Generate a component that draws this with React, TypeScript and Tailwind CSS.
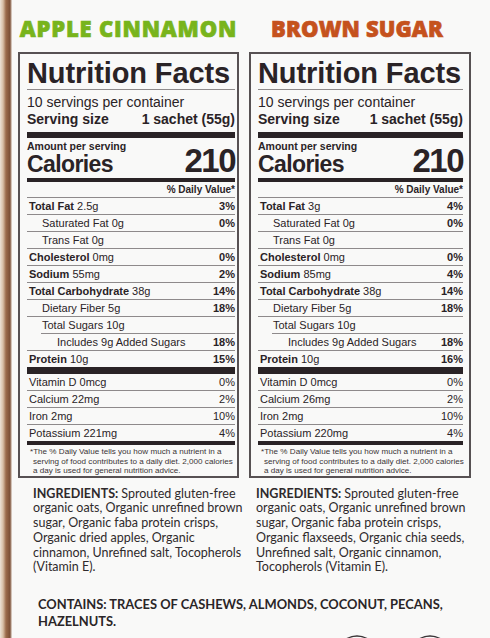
import React from "react";

type Label = {
  title: string;
  titleClass: string;
  fat: string;
  fatDv: string;
  sodium: string;
  sodiumDv: string;
  proteinDv: string;
  calcium: string;
  potassium: string;
  ingredients: string[];
  colClass: string;
  boxClass: string;
  ingPad: string;
};

const labels: Label[] = [
  {
    title: "APPLE CINNAMON",
    titleClass: "text-[#78b41c] tracking-[0.8px]",
    fat: "2.5g",
    fatDv: "3%",
    sodium: "55mg",
    sodiumDv: "2%",
    proteinDv: "15%",
    calcium: "22mg",
    potassium: "221mg",
    ingredients: [
      "Sprouted gluten-free",
      "organic oats, Organic unrefined brown",
      "sugar, Organic faba protein crisps,",
      "Organic dried apples, Organic",
      "cinnamon, Unrefined salt, Tocopherols",
      "(Vitamin E).",
    ],
    colClass: "w-[221px]",
    boxClass: "pl-[7px] pr-[2px]",
    ingPad: "pl-[15px]",
  },
  {
    title: "BROWN SUGAR",
    titleClass: "text-[#c5521d] tracking-[0.1px] pr-[6px]",
    fat: "3g",
    fatDv: "4%",
    sodium: "85mg",
    sodiumDv: "4%",
    proteinDv: "16%",
    calcium: "26mg",
    potassium: "220mg",
    ingredients: [
      "Sprouted gluten-free",
      "organic oats, Organic unrefined brown",
      "sugar, Organic faba protein crisps,",
      "Organic flaxseeds, Organic chia seeds,",
      "Unrefined salt, Organic cinnamon,",
      "Tocopherols (Vitamin E).",
    ],
    colClass: "w-[222px]",
    boxClass: "pl-[7px] pr-[6px]",
    ingPad: "pl-[7px]",
  },
];

type Nutrient = {
  bold?: string;
  text: string;
  dv?: string;
  indent?: 0 | 1 | 2;
  lineIndent?: boolean;
  last?: boolean;
};

function NutrientRow({ bold, text, dv, indent = 0, lineIndent, last }: Nutrient) {
  const pad = indent === 2 ? "pl-[30px]" : indent === 1 ? "pl-[15px]" : "pl-[2px]";
  return (
    <div className={`relative flex h-[16px] items-center justify-between ${pad} ${last ? "" : "mb-[1px]"}`}>
      <span>
        {bold && <span className="font-bold">{bold} </span>}
        {text}
      </span>
      {dv && <span className="font-bold">{dv}</span>}
      {!last && (
        <div
          className={`absolute bottom-[-1px] right-0 h-[1px] bg-[#8e8a8b] ${lineIndent ? "left-[14px]" : "left-0"}`}
        />
      )}
    </div>
  );
}

function VitaminRow({ text, dv, last }: { text: string; dv: string; last?: boolean }) {
  return (
    <div
      className={`flex items-center justify-between pl-[2px] ${last ? "h-[16px]" : "h-[17px] border-b border-[#8e8a8b]"}`}
    >
      <span>{text}</span>
      <span>{dv}</span>
    </div>
  );
}

function NutritionBox({ l }: { l: Label }) {
  const rows: Nutrient[] = [
    { bold: "Total Fat", text: l.fat, dv: l.fatDv },
    { text: "Saturated Fat 0g", dv: "0%", indent: 1 },
    { text: "Trans Fat 0g", indent: 1 },
    { bold: "Cholesterol", text: "0mg", dv: "0%" },
    { bold: "Sodium", text: l.sodium, dv: l.sodiumDv },
    { bold: "Total Carbohydrate", text: "38g", dv: "14%" },
    { text: "Dietary Fiber 5g", dv: "18%", indent: 1 },
    { text: "Total Sugars 10g", indent: 1, lineIndent: true },
    { text: "Includes 9g Added Sugars", dv: "18%", indent: 2 },
    { bold: "Protein", text: "10g", dv: l.proteinDv, last: true },
  ];

  return (
    <div
      className={`mt-[13px] border-2 border-[#575153] pt-[3px] text-[#2a2326] font-['Liberation_Sans',Arial,sans-serif] ${l.boxClass}`}
    >
      <div className="text-[29px] font-bold leading-[32px] tracking-[-0.1px] whitespace-nowrap">
        Nutrition Facts
      </div>
      <div className="h-[1px] bg-[#8e8a8b]" />
      <div className="mt-[4px] text-[14px] leading-[16px]">10 servings per container</div>
      <div className="mt-[1px] flex justify-between text-[14px] font-bold leading-[16px]">
        <span>Serving size</span>
        <span>1 sachet (55g)</span>
      </div>
      <div className="mt-[5px] h-[6px] bg-[#2a2326]" />
      <div className="mt-[2px] flex items-end justify-between">
        <div>
          <div className="text-[10.5px] font-bold leading-[12px]">Amount per serving</div>
          <div className="mt-[1px] text-[23px] font-bold leading-[22px] tracking-[-0.6px]">Calories</div>
        </div>
        <div className="text-[33px] font-bold leading-[28px] tracking-[-1.5px]">210</div>
      </div>
      <div className="mt-[3px] h-[4px] bg-[#2a2326]" />
      <div className="border-b border-[#8e8a8b] text-right text-[10px] font-bold leading-[15px]">
        % Daily Value*
      </div>
      <div className="text-[11px]">
        {rows.map((r, i) => (
          <NutrientRow key={i} {...r} />
        ))}
      </div>
      <div className="h-[7px] bg-[#2a2326]" />
      <div className="text-[11px]">
        <VitaminRow text="Vitamin D 0mcg" dv="0%" />
        <VitaminRow text={`Calcium ${l.calcium}`} dv="2%" />
        <VitaminRow text="Iron 2mg" dv="10%" />
        <VitaminRow text={`Potassium ${l.potassium}`} dv="4%" last />
      </div>
      <div className="h-[4px] bg-[#2a2326]" />
      <div className="mt-[2px] pl-[6px] text-[8.1px] leading-[9.5px] text-[#3a3436] whitespace-nowrap">
        <div className="-ml-[3px]">*The % Daily Value tells you how much a nutrient in a</div>
        <div>serving of food contributes to a daily diet. 2,000 calories</div>
        <div>a day is used for general nutrition advice.</div>
      </div>
    </div>
  );
}

function Column({ l }: { l: Label }) {
  return (
    <div className={`flex shrink-0 flex-col ${l.colClass}`}>
      <div
        className={`mt-[17px] text-center text-[22px] font-extrabold leading-[22px] whitespace-nowrap font-['Open_Sans',sans-serif] [-webkit-text-stroke:0.7px_currentColor] ${l.titleClass}`}
      >
        {l.title}
      </div>
      <NutritionBox l={l} />
      <div
        className={`mt-[9px] text-[12.5px] leading-[14.8px] text-[#2f2a2c] whitespace-nowrap font-['Lato',sans-serif] ${l.ingPad}`}
      >
        {l.ingredients.map((line, i) => (
          <div key={i}>
            {i === 0 && <span className="font-bold">INGREDIENTS: </span>}
            {line}
          </div>
        ))}
      </div>
    </div>
  );
}

export default function App() {
  return (
    <div className="flex h-[638px] w-[490px] overflow-hidden bg-[#f9f9f8]">
      <div className="w-[12px] shrink-0 bg-[linear-gradient(to_right,#ece2d6_0px,#d8bfa6_3px,#9b6b4b_6px,#7a4e35_10px,#efe9e3_12px)]" />
      <div className="flex flex-col pl-[6px]">
        <div className="flex gap-[10px]">
          <Column l={labels[0]} />
          <Column l={labels[1]} />
        </div>
        <div className="mt-[21px] pl-[20px] text-[12.9px] font-bold leading-[17px] text-[#2a2527] font-['Lato',sans-serif] whitespace-nowrap">
          <div>CONTAINS: TRACES OF CASHEWS, ALMONDS, COCONUT, PECANS,</div>
          <div>HAZELNUTS.</div>
        </div>
        <div className="mt-[4px] flex pl-[327px]">
          <svg width="24" height="5" viewBox="0 0 24 5">
            <path d="M1 5 Q12 -1 23 5" fill="none" stroke="#3a3436" strokeWidth="1.3" />
          </svg>
          <svg width="24" height="5" viewBox="0 0 24 5" className="ml-[49px]">
            <path d="M1 5 Q12 -1 23 5" fill="none" stroke="#3a3436" strokeWidth="1.3" />
          </svg>
        </div>
      </div>
    </div>
  );
}
